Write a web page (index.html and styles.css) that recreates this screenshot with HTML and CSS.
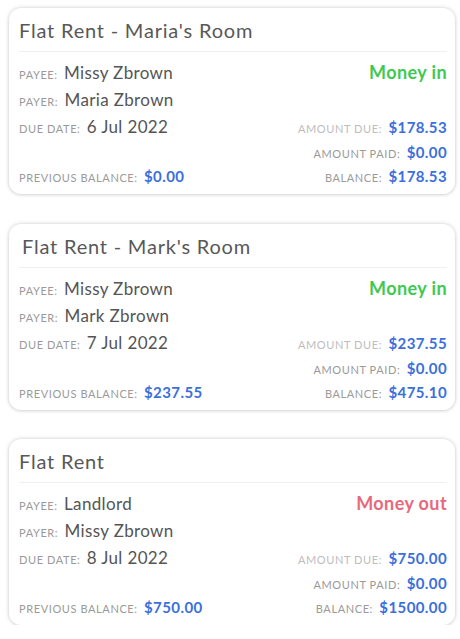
FILE: index.html
```
<!DOCTYPE html>
<html lang="en">
<head>
<meta charset="utf-8">
<title>Bills</title>
<link rel="stylesheet" href="styles.css">
</head>
<body>
<div class="list">
  <div class="card">
    <div class="title">Flat Rent - Maria's Room</div>
    <div class="body">
      <div class="row r1"><span class="cell"><span class="label">Payee:</span> <span class="val">Missy Zbrown</span></span><span class="cell"><span class="flow in">Money in</span></span></div>
      <div class="row r2"><span class="cell"><span class="label">Payer:</span> <span class="val">Maria Zbrown</span></span></div>
      <div class="row r3"><span class="cell"><span class="label">Due date:</span> <span class="val">6 Jul 2022</span></span><span class="cell"><span class="label light">Amount due:</span> <span class="amt">$178.53</span></span></div>
      <div class="row r4"><span class="cell"></span><span class="cell"><span class="label">Amount paid:</span> <span class="amt">$0.00</span></span></div>
      <div class="row r5"><span class="cell"><span class="label">Previous balance:</span> <span class="amt">$0.00</span></span><span class="cell"><span class="label">Balance:</span> <span class="amt">$178.53</span></span></div>
    </div>
  </div>
  <div class="card">
    <div class="title title-indent">Flat Rent - Mark's Room</div>
    <div class="body">
      <div class="row r1"><span class="cell"><span class="label">Payee:</span> <span class="val">Missy Zbrown</span></span><span class="cell"><span class="flow in">Money in</span></span></div>
      <div class="row r2"><span class="cell"><span class="label">Payer:</span> <span class="val">Mark Zbrown</span></span></div>
      <div class="row r3"><span class="cell"><span class="label">Due date:</span> <span class="val">7 Jul 2022</span></span><span class="cell"><span class="label light">Amount due:</span> <span class="amt">$237.55</span></span></div>
      <div class="row r4"><span class="cell"></span><span class="cell"><span class="label">Amount paid:</span> <span class="amt">$0.00</span></span></div>
      <div class="row r5"><span class="cell"><span class="label">Previous balance:</span> <span class="amt">$237.55</span></span><span class="cell"><span class="label">Balance:</span> <span class="amt">$475.10</span></span></div>
    </div>
  </div>
  <div class="card">
    <div class="title">Flat Rent</div>
    <div class="body">
      <div class="row r1"><span class="cell"><span class="label">Payee:</span> <span class="val">Landlord</span></span><span class="cell"><span class="flow out">Money out</span></span></div>
      <div class="row r2"><span class="cell"><span class="label">Payer:</span> <span class="val">Missy Zbrown</span></span></div>
      <div class="row r3"><span class="cell"><span class="label">Due date:</span> <span class="val">8 Jul 2022</span></span><span class="cell"><span class="label light">Amount due:</span> <span class="amt">$750.00</span></span></div>
      <div class="row r4"><span class="cell"></span><span class="cell"><span class="label">Amount paid:</span> <span class="amt">$0.00</span></span></div>
      <div class="row r5"><span class="cell"><span class="label">Previous balance:</span> <span class="amt">$750.00</span></span><span class="cell"><span class="label">Balance:</span> <span class="amt">$1500.00</span></span></div>
    </div>
  </div>
</div>
</body>
</html>
```
FILE: styles.css
```
* { box-sizing: border-box; }
html, body { margin: 0; padding: 0; background: #ffffff; }
body {
  font-family: Lato, "Open Sans", "Liberation Sans", sans-serif;
  color: #555555;
}
.list {
  display: flex;
  flex-direction: column;
  gap: 29.5px;
  padding: 8px 5px 0 9px;
}
.card {
  height: 186px;
  background: #ffffff;
  border-radius: 12px;
  box-shadow: 0 0 4px rgba(0, 0, 0, 0.2), 0 1px 3px rgba(0, 0, 0, 0.06);
  padding: 10px 8px 0 10px;
}
.title {
  font-size: 20px;
  line-height: 24px;
  letter-spacing: 0.8px;
  color: #585858;
  padding-bottom: 9px;
  border-bottom: 1px solid #f0f0f0;
}
.title-indent { padding-left: 3px; }
.body { padding-top: 7px; }
.row {
  display: flex;
  justify-content: space-between;
  font-size: 17px;
}
.r1, .r2, .r3 { line-height: 27px; height: 27px; }
.r4, .r5 { line-height: 24px; height: 24px; }
.cell { display: block; white-space: nowrap; }
.label {
  line-height: 1;
  font-size: 11px;
  text-transform: uppercase;
  letter-spacing: 0.6px;
  color: #9a9a9a;
  margin-right: 2px;
}
.label.light { color: #bdbdbd; }
.val { line-height: 1; font-size: 17px; letter-spacing: 0.35px; color: #555555; }
.amt { line-height: 1; font-size: 15px; font-weight: 700; letter-spacing: 0.4px; color: #3b6fdc; }
.flow { line-height: 1; font-size: 18px; font-weight: 700; letter-spacing: 0.4px; }
.flow.in { color: #40c94f; }
.flow.out { color: #e8697b; }
```
